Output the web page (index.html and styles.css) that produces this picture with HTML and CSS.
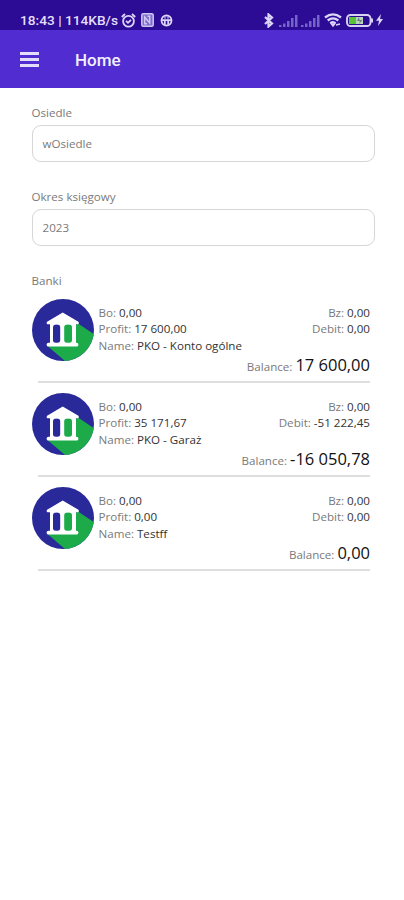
FILE: index.html
```html
<!DOCTYPE html>
<html lang="pl">
<head>
    <meta charset="UTF-8">
    <meta name="viewport" content="width=device-width, initial-scale=1.0">
    <title>Home</title>
    <link rel="stylesheet" href="styles.css">
</head>
<body>
    <!-- Shared bank icon -->
    <svg width="0" height="0" class="sprite">
        <symbol id="bank" viewBox="0 0 62 62">
            <circle cx="31" cy="31" r="31" fill="#29299a"/>
            <path d="M46 24.500L61.700 35A31 31 0 0 1 33 61.900L15.500 47z" fill="#1cab48"/>
            <path d="M18 25h26v20H18z" fill="#fff"/>
            <rect x="21" y="25.500" width="7.200" height="18.500" rx="3" fill="#29299a"/>
            <rect x="32.200" y="25.500" width="7.800" height="18.500" rx="3" fill="#1cab48"/>
            <path d="M30.700 14.300L46 23.300v1.200H15.500v-1.200z" fill="#fff" stroke="#fff" stroke-width="1.500" stroke-linejoin="round"/>
            <path d="M16.500 45.700h28" stroke="#fff" stroke-width="3.800" stroke-linecap="round"/>
        </symbol>
    </svg>

    <!-- Status bar -->
    <div class="status-bar">
        <span class="status-text">18:43 | 114KB/s</span>
        <svg class="icon-alarm" width="15" height="15" viewBox="0 0 15 15" fill="none" stroke="#dcd5fa" stroke-width="1.800">
            <circle cx="7.500" cy="8.200" r="5.400"/>
            <path d="M.8 4l3.200-3M14.200 4L11 1M5 7.800l2 2 3-3"/>
        </svg>
        <svg class="icon-nfc" width="13" height="14" viewBox="0 0 13 14" fill="none" stroke="#cfc6f5" stroke-width="1.500">
            <rect x=".8" y=".8" width="11.400" height="12.400" rx="1.500" fill="#7d6dca"/>
            <path d="M3.700 10.700V4l5 6V3.300H6.500M3 10.700h3"/>
        </svg>
        <svg class="icon-android" width="13" height="13" viewBox="0 0 13 13" fill="none" stroke="#dcd5fa" stroke-width="1.800">
            <circle cx="6.500" cy="6.500" r="5"/>
            <path d="M1 6.200h11M4.800 6v4.500M8.200 6v4.500M4.500 3.800h1M7.500 3.800h1"/>
        </svg>
        <div class="status-right">
            <svg width="10" height="15" viewBox="0 0 10 15" fill="none" stroke="#dcd5fa" stroke-width="2.200">
                <path d="M1 4l7 6.500-3.500 3v-12L8 4.500 1 11"/>
            </svg>
            <svg class="icon-signal" width="19" height="13" viewBox="0 0 19 13" fill="#7565c8">
                <path d="M0 11h2.500v2H0zM4 9.500h2.500V13H4zM8 7h2.500v6H8zM12 4h2.500v9H12zM16 1h2.500v12H16z"/>
            </svg>
            <svg class="icon-signal" width="19" height="13" viewBox="0 0 19 13" fill="#7565c8">
                <path d="M0 11h2.500v2H0zM4 9.500h2.500V13H4zM8 7h2.500v6H8zM12 4h2.500v9H12zM16 1h2.500v12H16z"/>
            </svg>
            <svg class="icon-wifi" width="18" height="14" viewBox="0 0 18 14" fill="none" stroke="#dcd5fa" stroke-width="2.300">
                <path d="M1 4.500Q9-1.800 17 4.500M3.700 7.500Q9 3.200 14.300 7.500M6.300 10.300Q9 8 11.500 10.300"/>
                <path d="M7.500 11h3L9 13zM12 12l4-1" fill="#dcd5fa" stroke-width="1.500"/>
            </svg>
            <svg class="icon-battery" width="28" height="13" viewBox="0 0 28 13">
                <rect x="1" y="1" width="23.500" height="11" rx="3.500" fill="#2a0a90" stroke="#d8d2f2" stroke-width="1.900"/>
                <path d="M3 3h7v7H3z" fill="#59c436"/>
                <path d="M10 3h7v7h-7z" fill="#b7d7b7"/>
                <path d="M13 3l-2 4h3l-1 3 3.500-4h-3z" fill="#727b91"/>
                <path d="M25 4.500h2v4h-2z" fill="#d8d2f2"/>
            </svg>
            <svg class="icon-bolt" width="7" height="12" viewBox="0 0 7 12" fill="#dcd5fa">
                <path d="M5 0L0 6.800h3L2 12l5-7H4z"/>
            </svg>
        </div>
    </div>

    <!-- Toolbar -->
    <div class="toolbar">
        <div class="menu-button">
            <span></span>
            <span></span>
            <span></span>
        </div>
        <div class="toolbar-title">Home</div>
    </div>

    <div class="main-content">
        <div class="field">
            <div class="label">Osiedle</div>
            <div class="field-box">wOsiedle</div>
        </div>
        <div class="field">
            <div class="label">Okres księgowy</div>
            <div class="field-box">2023</div>
        </div>

        <!-- Bank list -->
        <div class="label">Banki</div>
        <div class="bank">
            <svg class="bank-icon"><use href="#bank"/></svg>
            <div class="bank-body">
                <div class="bank-row"><div>Bo: <b>0,00</b></div><div>Bz: <b>0,00</b></div></div>
                <div class="bank-row"><div>Profit: <b>17 600,00</b></div><div>Debit: <b>0,00</b></div></div>
                <div class="bank-row"><div>Name: <b>PKO - Konto ogólne</b></div></div>
                <div class="balance"><span>Balance:</span><b>17 600,00</b></div>
            </div>
        </div>
        <div class="bank">
            <svg class="bank-icon"><use href="#bank"/></svg>
            <div class="bank-body">
                <div class="bank-row"><div>Bo: <b>0,00</b></div><div>Bz: <b>0,00</b></div></div>
                <div class="bank-row"><div>Profit: <b>35 171,67</b></div><div>Debit: <b>-51 222,45</b></div></div>
                <div class="bank-row"><div>Name: <b>PKO - Garaż</b></div></div>
                <div class="balance"><span>Balance:</span><b>-16 050,78</b></div>
            </div>
        </div>
        <div class="bank">
            <svg class="bank-icon"><use href="#bank"/></svg>
            <div class="bank-body">
                <div class="bank-row"><div>Bo: <b>0,00</b></div><div>Bz: <b>0,00</b></div></div>
                <div class="bank-row"><div>Profit: <b>0,00</b></div><div>Debit: <b>0,00</b></div></div>
                <div class="bank-row"><div>Name: <b>Testff</b></div></div>
                <div class="balance"><span>Balance:</span><b>0,00</b></div>
            </div>
        </div>
    </div>
</body>
</html>
```
FILE: styles.css
```css
* {margin: 0; padding: 0; box-sizing: border-box;}
body {font-family: "Open Sans", sans-serif; font-size: 11.6px; background-color: #fff; color: #7a7a7a;}
svg {display: block; flex-shrink: 0;}
.sprite {display: none;}

/* Status bar */
.status-bar {height: 30px; padding: 10px 21px 0 20px; display: flex; align-items: center; background-color: #2c0b95;}
.status-text {width: 98px; font-family: Roboto, sans-serif; font-size: 13.7px; font-weight: 500; line-height: 20px; color: #e4defb; white-space: nowrap;}
.icon-alarm {margin-left: 3px;}
.icon-nfc {margin-left: 5px;}
.icon-android {margin-left: 6px;}
.status-right {display: flex; align-items: center; margin-left: auto;}
.icon-signal {margin-left: 5px;}
.status-right .icon-signal:nth-child(3) {margin-left: 3px;}
.icon-wifi {margin-left: 4px;}
.icon-battery {margin-left: 4px;}
.icon-bolt {margin-left: 2px;}

/* Toolbar */
.toolbar {height: 58px; padding-left: 20px; display: flex; align-items: center; background-color: #512dd1;}
.menu-button {width: 19px; display: flex; flex-direction: column; gap: 3px;}
.menu-button span {height: 3px; background-color: #e3dcfa;}
.toolbar-title {margin: 2px 0 0 36px; font-family: Roboto, sans-serif; font-size: 17px; font-weight: 500; color: #f3f0ff;}

/* Form */
.main-content {padding: 17px 29px 0 31.5px;}
.label {height: 16px; line-height: 16px;}
.field {margin-bottom: 26px;}
.field-box {height: 37px; margin-top: 4px; margin-bottom: 27px; padding-left: 10px; line-height: 35px; border: 1.5px solid #d6d6d6; border-radius: 9px;}

/* Bank list */
.bank {height: 94.2px; padding-right: 5px; display: flex; position: relative;}
.bank::after {content: ""; position: absolute; left: 6px; right: 5px; bottom: 10px; height: 2px; background-color: #dedede;}
.label + .bank {margin-top: 9.5px;}
.bank-icon {width: 62px; height: 62px;}
.bank-body {flex: 1; margin-left: 5px; padding-top: 6px;}
.bank-row {height: 16.5px; line-height: 16.5px; display: flex; justify-content: space-between;}
.bank b {font-weight: 400; color: #333;}
.balance {height: 22px; display: flex; justify-content: flex-end; gap: 3px; line-height: 22px;}
.balance span {padding-top: 2px;}
.bank .balance b {font-size: 16.5px; color: #111;}
```
